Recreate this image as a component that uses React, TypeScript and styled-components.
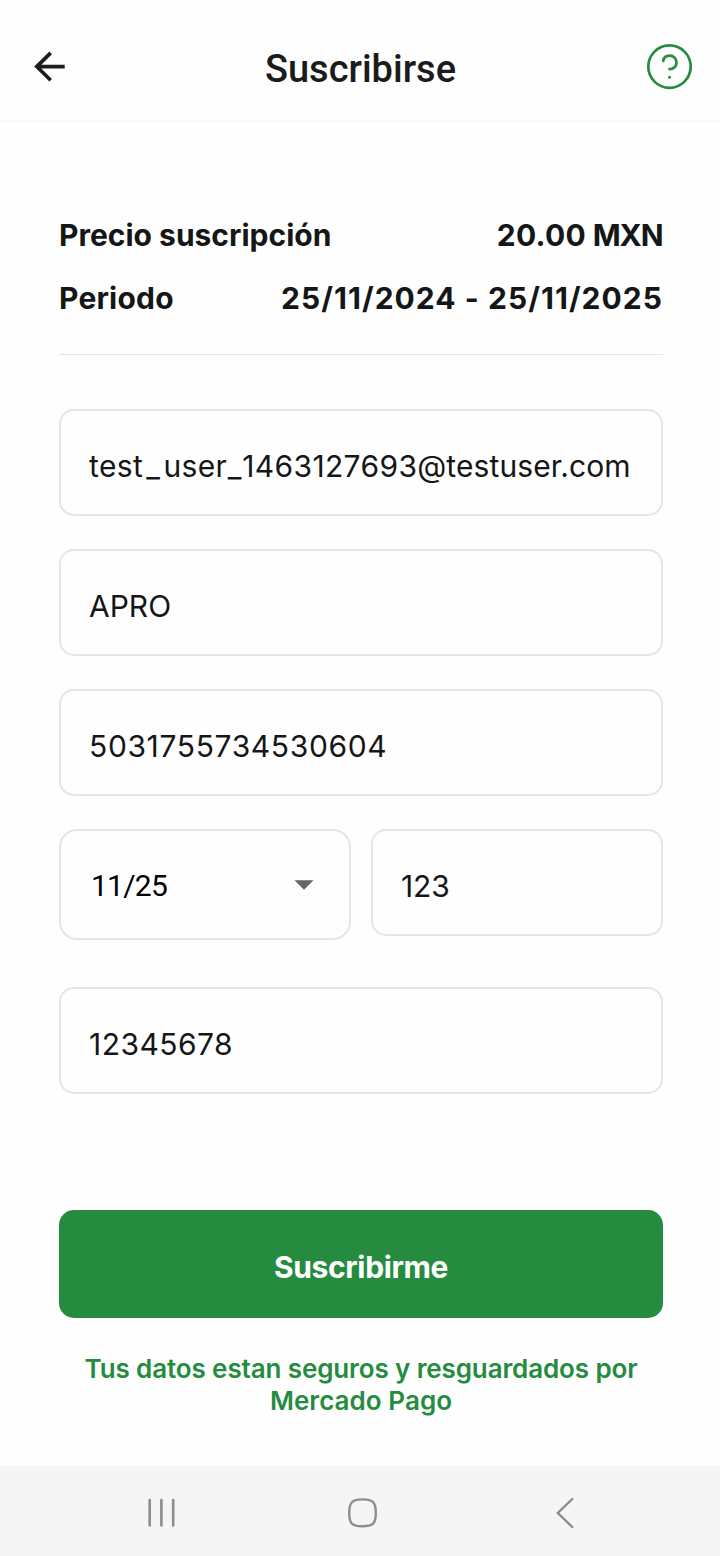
import React from 'react';
import styled, { createGlobalStyle } from 'styled-components';

const GlobalStyle = createGlobalStyle`
  * { box-sizing: border-box; }
  body { margin: 0; background: #fefefe; }
`;

const Screen = styled.div`
  width: 720px;
  height: 1556px;
  display: flex;
  flex-direction: column;
  background: #fefefe;
  color: #141617;
  font-family: Inter, 'Open Sans', sans-serif;
`;

const Header = styled.header`
  height: 122px;
  flex: none;
  display: grid;
  grid-template-columns: 100px 1fr 100px;
  align-items: center;
  padding: 13px 0 0;
  border-bottom: 2px solid #fafafa;
`;

const IconButton = styled.button<{ $align: 'start' | 'end' }>`
  display: flex;
  justify-content: flex-${(p) => p.$align};
  padding: ${(p) => (p.$align === 'start' ? '0 0 0 34px' : '0 28px 0 0')};
  margin: 0;
  border: 0;
  background: none;
`;

const Title = styled.h1`
  margin: 0;
  padding: 4px 0 0 1px;
  text-align: center;
  font: 500 38px/44px Roboto, sans-serif;
  color: #1b1b1c;
`;

const Content = styled.main`
  flex: 1;
  display: flex;
  flex-direction: column;
  padding: 82px 57px 0 59px;
`;

const Summary = styled.dl`
  margin: 0;
  height: 151px;
  border-bottom: 1px solid #e4e5e6;
`;

const SummaryRow = styled.div`
  display: flex;
  justify-content: space-between;
  height: 63px;
  font-size: 30px;
  font-weight: 700;
  line-height: 63px;
  white-space: nowrap;
`;

const Tracked = styled.span<{ $spacing: number }>`
  letter-spacing: ${(p) => p.$spacing}px;
`;

const Term = styled.dt<{ $spacing: number }>`
  letter-spacing: ${(p) => p.$spacing}px;
`;

const Detail = styled.dd<{ $spacing: number }>`
  margin: 0;
  letter-spacing: ${(p) => p.$spacing}px;
`;

const Form = styled.form`
  display: flex;
  flex-direction: column;
  gap: 33px;
  padding-top: 54px;
`;

const Field = styled.div<{ $spacing?: number }>`
  height: 107px;
  display: flex;
  align-items: center;
  padding: 7px 0 0 28px;
  border: 2px solid #e5e5e5;
  border-radius: 15px;
  font-size: 30px;
  line-height: 40px;
  white-space: nowrap;
  letter-spacing: ${(p) => p.$spacing ?? 0}px;
`;

const SplitRow = styled.div`
  display: grid;
  grid-template-columns: 292px 292px;
  justify-content: space-between;
  align-items: start;
  height: 125px;
`;

const Select = styled(Field)`
  height: 111px;
  justify-content: space-between;
  padding: 2px 35px 0 30px;
  border-radius: 18px;
  font-family: Roboto, sans-serif;
  color: #000;
`;

const Caret = styled.svg`
  margin-bottom: 2px;
`;

const Submit = styled.button`
  height: 108px;
  margin: 116px 0 0;
  padding: 6px 0 0;
  border: 0;
  border-radius: 15px;
  background: #258b3f;
  color: #fff;
  font: 700 30px/40px Inter, sans-serif;
  letter-spacing: -0.35px;
`;

const Note = styled.p`
  margin: 35px 0 0;
  text-align: center;
  color: #258b3f;
  font-size: 26px;
  font-weight: 600;
  line-height: 32px;
`;

const NoteLine = styled.span<{ $spacing: number }>`
  display: block;
  white-space: nowrap;
  letter-spacing: ${(p) => p.$spacing}px;
`;

const NavBar = styled.nav`
  height: 90px;
  flex: none;
  display: grid;
  grid-template-columns: 202px 207px 20px;
  align-items: center;
  padding: 3px 0 0 146px;
  background: #f5f5f5;
`;

export default function App() {
  return (
    <>
      <GlobalStyle />
      <Screen>
        <Header>
          <IconButton $align="start" aria-label="Volver">
            <svg width="32" height="32" viewBox="0 0 32 32" fill="none" stroke="#1c1b1f" strokeWidth="3.7">
              <path d="M16.700 1.900 2.800 15.600l13.900 13.700M3 15.600h27.700" />
            </svg>
          </IconButton>
          <Title>Suscribirse</Title>
          <IconButton $align="end" aria-label="Ayuda">
            <svg width="46" height="46" viewBox="0 0.400 46 46" fill="none" stroke="#258b3f" strokeWidth="2.7" strokeLinecap="round">
              <circle cx="23.500" cy="23" r="21.200" />
              <path d="M17.200 17.400c.6-3.300 3.200-5.300 6.500-5.300 3.800 0 6.800 2.900 6.800 6.700 0 3.900-3 6.800-7 6.800" />
              <circle cx="23.500" cy="33.700" r="1.500" fill="#258b3f" stroke="none" />
            </svg>
          </IconButton>
        </Header>
        <Content>
          <Summary>
            <SummaryRow>
              <Term $spacing={0}>Precio suscripción</Term>
              <Detail $spacing={-0.5}>
                <Tracked $spacing={0.3}>20.00</Tracked> <Tracked $spacing={-1.1}>MX</Tracked>N
              </Detail>
            </SummaryRow>
            <SummaryRow>
              <Term $spacing={0.2}>Periodo</Term>
              <Detail $spacing={1.05}>25/11/2024 - 25/11/2025</Detail>
            </SummaryRow>
          </Summary>
          <Form>
            <Field>
              <Tracked $spacing={0.4}>tes</Tracked>
              <Tracked $spacing={3.5}>t_</Tracked>
              <Tracked $spacing={0.3}>use</Tracked>
              <Tracked $spacing={0.9}>r_</Tracked>
              <Tracked $spacing={0.35}>1463127693</Tracked>
              <Tracked $spacing={0.1}>@testuser.com</Tracked>
            </Field>
            <Field>APRO</Field>
            <Field $spacing={0.64}>5031755734530604</Field>
            <SplitRow>
              <Select $spacing={-0.75}>
                11/25
                <Caret width="20" height="10" viewBox="0 0 20 10"><path d="M.5.3h19L10 9.700z" fill="#666" /></Caret>
              </Select>
              <Field $spacing={-0.1}>123</Field>
            </SplitRow>
            <Field $spacing={0.45}>12345678</Field>
          </Form>
          <Submit>Suscribirme</Submit>
          <Note>
            <NoteLine $spacing={-0.12}>Tus datos estan seguros y resguardados por</NoteLine>
            <NoteLine $spacing={0.05}>Mercado Pago</NoteLine>
          </Note>
        </Content>
        <NavBar>
          <svg width="30" height="30" viewBox="0 0 30 30" stroke="#8d8d8d" strokeWidth="2.6" strokeLinecap="round">
            <path d="M3.700 2v25.500M15.400 2v25.500M27.200 2v25.500" />
          </svg>
          <svg width="30" height="30" viewBox="0 0 30 30" fill="none" stroke="#8d8d8d" strokeWidth="2.4">
            <path d="M14.500 1.400C25 1.400 27.800 4.200 27.800 15S25 28.300 14.500 28.300 1.200 25.500 1.200 15 4 1.400 14.500 1.400z" />
          </svg>
          <svg width="20" height="32" viewBox="0 0 20 32" fill="none" stroke="#8d8d8d" strokeWidth="2.4" strokeLinecap="round">
            <path d="M17.300 2 2.800 16l14.500 14" />
          </svg>
        </NavBar>
      </Screen>
    </>
  );
}
